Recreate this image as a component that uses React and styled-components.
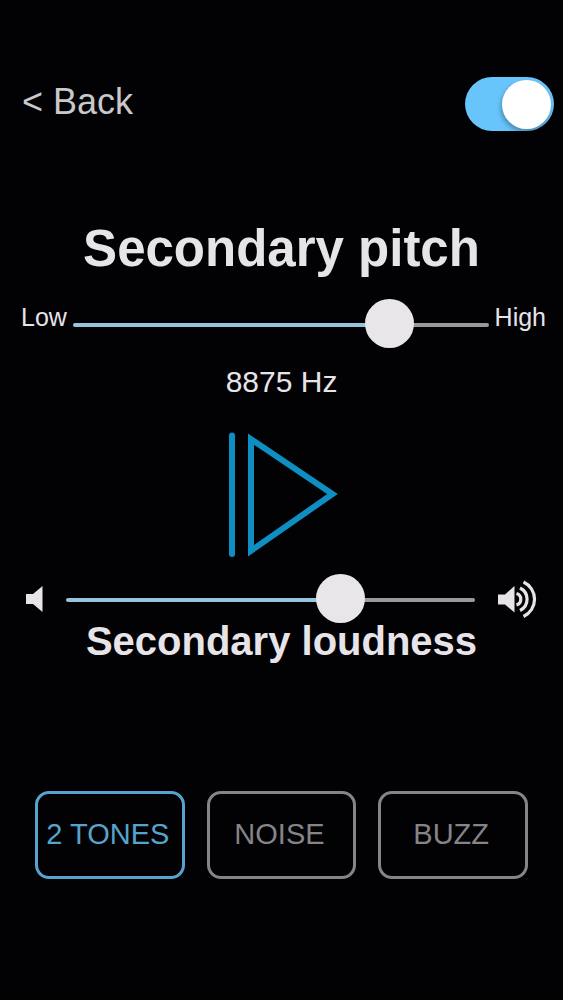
import { useState } from "react";
import styled, { createGlobalStyle } from "styled-components";

const GlobalStyle = createGlobalStyle`
  * {
    box-sizing: border-box;
  }

  body {
    margin: 0;
    background-color: #020103;
    color: #e6e4e8;
    font-family: "Liberation Sans", Arial, sans-serif;
  }
`;

const Screen = styled.main`
  display: flex;
  flex-direction: column;
  min-height: 100vh;
  padding: 77px 0 40px;
`;
const Header = styled.header`
  display: flex;
  align-items: flex-start;
  justify-content: space-between;
  padding: 0 9px 0 22px;
`;
const BackLink = styled.a`
  color: #c9c8cb;
  font-size: 36px;
  line-height: 50px;
  text-decoration: none;
`;
const Toggle = styled.input`
  appearance: none;
  display: flex;
  align-items: center;
  width: 89px;
  height: 54px;
  margin: 0;
  padding: 0 3px;
  border-radius: 27px;
  background-color: #3a3a3c;
  cursor: pointer;

  &::before {
    content: "";
    width: 49px;
    height: 49px;
    border-radius: 50%;
    background-color: #ffffff;
    box-shadow: -1px 3px 5px rgba(0, 0, 0, 0.3);
  }

  &:checked {
    justify-content: flex-end;
    background-color: #68c5fb;
  }
`;

const Title = styled.h1`
  margin: 88px 0 20px;
  font-size: 51px;
  line-height: 60px;
  text-align: center;
`;
const Subtitle = styled.h2`
  margin: 0;
  font-size: 40px;
  line-height: 36px;
  text-align: center;
`;
const SliderRow = styled.div`
  display: flex;
  align-items: flex-start;
  gap: ${({ $gap }) => $gap}px;
  padding: ${({ $padding }) => $padding};
`;
const SliderLabel = styled.label`
  font-size: 25px;
  line-height: 36px;
`;
const Slider = styled.input`
  appearance: none;
  flex: 1;
  min-width: 0;
  height: 49px;
  margin: 0;
  background: transparent;
  cursor: pointer;

  &::-webkit-slider-runnable-track {
    height: 4px;
    margin-top: 3px;
    border-radius: 2px;
    background: linear-gradient(
      to right,
      #94c4de var(--fill),
      #9b989b var(--fill)
    );
  }

  &::-webkit-slider-thumb {
    appearance: none;
    width: 49px;
    height: 49px;
    margin-top: -24px;
    border: none;
    border-radius: 50%;
    background-color: #e8e6e9;
  }
`;
const Frequency = styled.output`
  margin-top: 16px;
  font-size: 30px;
  line-height: 36px;
  text-align: center;
`;
const PlayButton = styled.button`
  display: flex;
  align-self: center;
  margin: 31px 0 16px;
  padding: 0;
  border: none;
  background: none;
  color: #0e8ec1;
  cursor: pointer;
`;
const VolumeIcon = styled.svg`
  flex: none;
  height: 49px;
`;
const Modes = styled.div`
  display: grid;
  grid-template-columns: repeat(3, 1fr);
  gap: 22px;
  margin-top: 132px;
  padding: 0 35px;
`;
const ModeButton = styled.button`
  height: 88px;
  padding: 0 4px 2px 0;
  border: 3px solid currentColor;
  border-radius: 14px;
  background: none;
  color: ${({ $active }) => ($active ? "#56a4cd" : "#868488")};
  font-family: inherit;
  font-size: 29px;
  white-space: nowrap;
  cursor: pointer;
`;

const MIN_PITCH = 200;
const MAX_PITCH = 11100;
const modes = ["2 TONES", "NOISE", "BUZZ"];

const getFill = (value, min, max) => `${((value - min) / (max - min)) * 100}%`;

const App = () => {
  const [enabled, setEnabled] = useState(true);
  const [pitch, setPitch] = useState(8875);
  const [loudness, setLoudness] = useState(139);
  const [mode, setMode] = useState(modes[0]);

  return (
    <>
      <GlobalStyle />
      <Screen>
        <Header>
          <BackLink href="#">&lt; Back</BackLink>
          <Toggle
            type="checkbox"
            role="switch"
            aria-label="Secondary sound"
            checked={enabled}
            onChange={(e) => setEnabled(e.target.checked)}
          />
        </Header>

        <Title>Secondary pitch</Title>
        <SliderRow $gap={6} $padding="0 17px 0 21px">
          <SliderLabel htmlFor="pitch">Low</SliderLabel>
          <Slider
            id="pitch"
            type="range"
            aria-label="Secondary pitch"
            min={MIN_PITCH}
            max={MAX_PITCH}
            step={25}
            value={pitch}
            onChange={(e) => setPitch(Number(e.target.value))}
            style={{ "--fill": getFill(pitch, MIN_PITCH, MAX_PITCH) }}
          />
          <SliderLabel htmlFor="pitch">High</SliderLabel>
        </SliderRow>
        <Frequency htmlFor="pitch">{pitch} Hz</Frequency>

        <PlayButton type="button" aria-label="Play">
          <svg
            width="113"
            height="127"
            viewBox="0 0 113 127"
            fill="none"
            stroke="currentColor"
            strokeWidth="6"
          >
            <path d="M7 4.5V123" strokeLinecap="round" />
            <path d="M26 8.2L107.5 63L26 119.8Z" strokeMiterlimit="10" />
          </svg>
        </PlayButton>

        <SliderRow $gap={23} $padding="0 25px 0 26px">
          <VolumeIcon width="17" viewBox="0 0 17 49" fill="#e6e4e8" aria-hidden>
            <path d="M0 20H7L16.5 12V38L7 30H0Z" />
          </VolumeIcon>
          <Slider
            type="range"
            aria-labelledby="loudness-title"
            min={0}
            max={200}
            value={loudness}
            onChange={(e) => setLoudness(Number(e.target.value))}
            style={{ "--fill": getFill(loudness, 0, 200) }}
          />
          <VolumeIcon
            width="40"
            viewBox="0 0 40 49"
            fill="none"
            stroke="#e6e4e8"
            strokeWidth="3.2"
            aria-hidden
          >
            <path d="M0 20.5H7L16.5 12V38.5L7 30.5H0Z" fill="#e6e4e8" stroke="none" />
            <path d="M18.5 19.5A6 6 0 0 1 18.5 31" />
            <path d="M22 14A12.5 12.5 0 0 1 22 36.5" />
            <path d="M25.5 8A19 19 0 0 1 25.5 42.5" />
          </VolumeIcon>
        </SliderRow>
        <Subtitle id="loudness-title">Secondary loudness</Subtitle>

        <Modes>
          {modes.map((name) => (
            <ModeButton
              key={name}
              type="button"
              $active={name === mode}
              aria-pressed={name === mode}
              onClick={() => setMode(name)}
            >
              {name}
            </ModeButton>
          ))}
        </Modes>
      </Screen>
    </>
  );
};

export default App;
